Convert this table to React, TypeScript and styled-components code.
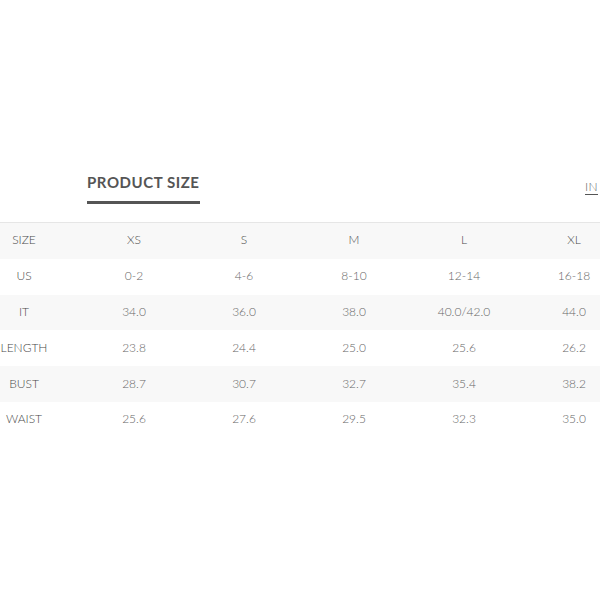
import React from "react";
import styled, { createGlobalStyle } from "styled-components";

const Global = createGlobalStyle`
  html, body { margin: 0; padding: 0; background: #fff; }
  body { overflow: hidden; font-family: Lato, "Open Sans", sans-serif; }
`;

const Viewport = styled.div`
  width: 600px;
  height: 600px;
  overflow: hidden;
  background: #fff;
`;

const Sheet = styled.div`
  width: 660px;
  margin-left: -31px;
  padding-top: 173px;
`;

const Header = styled.div`
  display: flex;
  align-items: flex-start;
  padding-left: 118px;
  height: 49px;
`;

const Tab = styled.div`
  font-size: 15px;
  line-height: 18px;
  font-weight: 700;
  letter-spacing: 0.55px;
  color: #555;
  padding-bottom: 10px;
  border-bottom: 3px solid #555;
`;

const Unit = styled.div`
  margin-left: auto;
  margin-right: 31px;
  margin-top: 7px;
  font-size: 12px;
  line-height: 13px;
  letter-spacing: 0.4px;
  font-weight: 300;
  color: #666;
  padding-bottom: 1px;
  border-bottom: 1px solid #555;
`;

const Table = styled.div`
  border-top: 1px solid #e6e6e6;
`;

const Row = styled.div<{ $shade: boolean }>`
  display: grid;
  grid-template-columns: repeat(6, 110px);
  height: 35.8px;
  align-items: center;
  background: ${(p) => (p.$shade ? "#f8f8f8" : "#fff")};
  font-size: 12px;
  font-weight: 300;
  padding-bottom: 2px;
  box-sizing: border-box;
`;

const Cell = styled.div<{ $label?: boolean }>`
  text-align: center;
  color: ${(p) => (p.$label ? "#4a4a4a" : "#666")};
`;

const rows: string[][] = [
  ["SIZE", "XS", "S", "M", "L", "XL"],
  ["US", "0-2", "4-6", "8-10", "12-14", "16-18"],
  ["IT", "34.0", "36.0", "38.0", "40.0/42.0", "44.0"],
  ["LENGTH", "23.8", "24.4", "25.0", "25.6", "26.2"],
  ["BUST", "28.7", "30.7", "32.7", "35.4", "38.2"],
  ["WAIST", "25.6", "27.6", "29.5", "32.3", "35.0"],
];

export default function App() {
  return (
    <>
      <Global />
      <Viewport>
        <Sheet>
          <Header>
            <Tab>PRODUCT SIZE</Tab>
            <Unit>IN</Unit>
          </Header>
          <Table>
            {rows.map((r, i) => (
              <Row key={r[0]} $shade={i % 2 === 0}>
                {r.map((c, j) => (
                  <Cell key={j} $label={j === 0 || i === 0}>
                    {c}
                  </Cell>
                ))}
              </Row>
            ))}
          </Table>
        </Sheet>
      </Viewport>
    </>
  );
}
